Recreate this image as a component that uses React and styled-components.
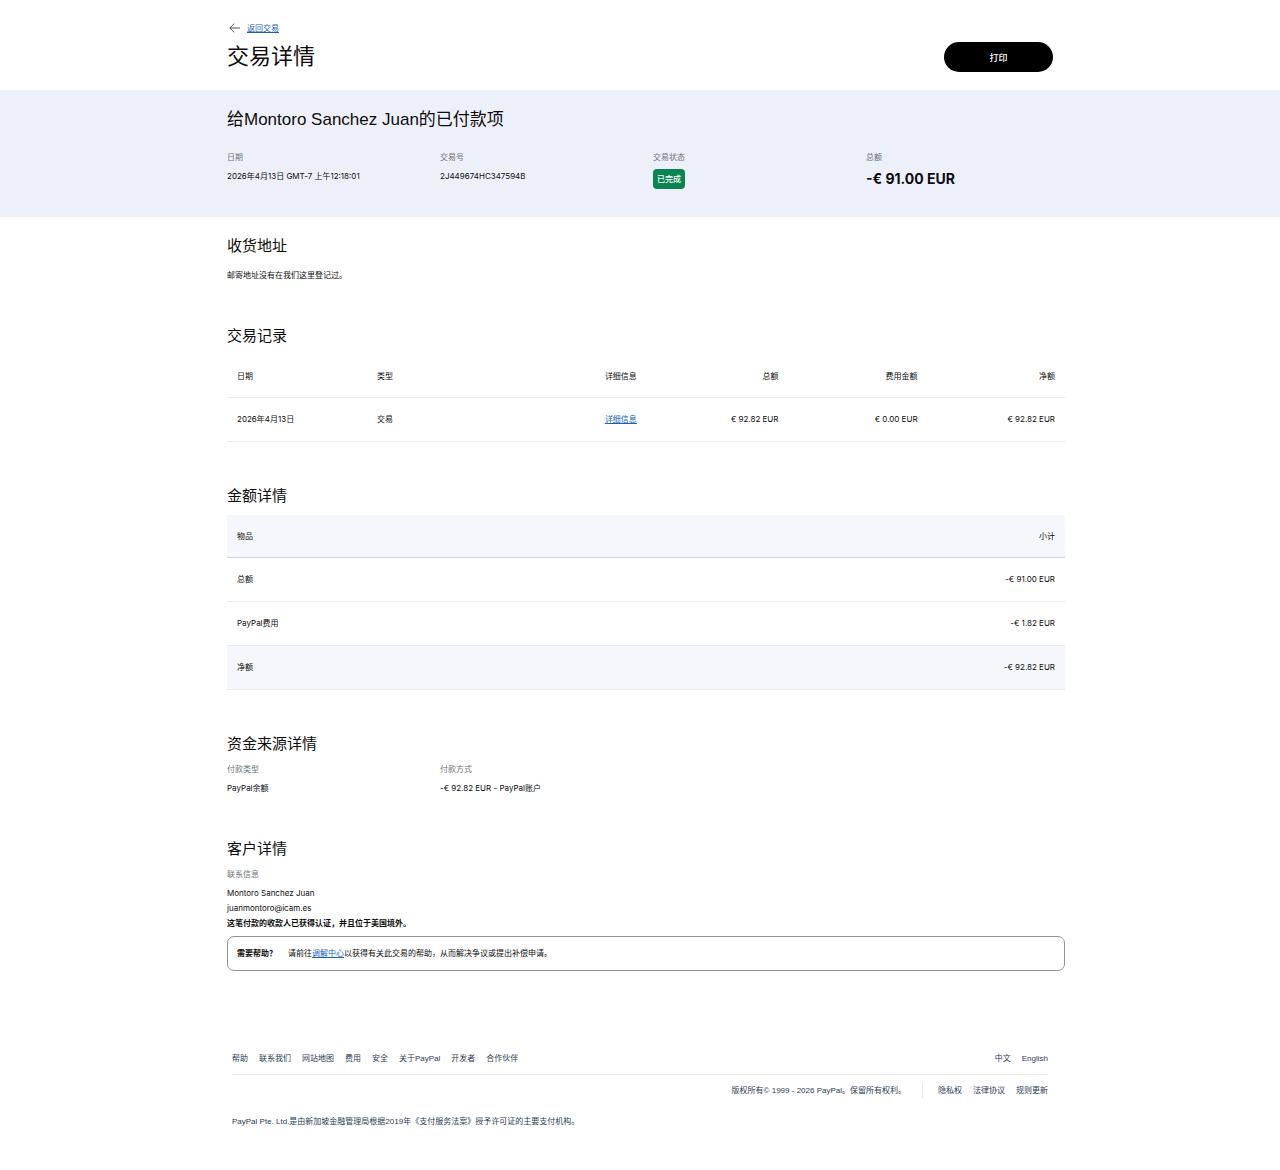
import React from 'react';
import styled, { createGlobalStyle } from 'styled-components';

const GlobalStyle = createGlobalStyle`
    * {
        box-sizing: border-box;
    }

    body {
        margin: 0;
        background: #fff;
        color: #0d0d0d;
        font-family: Inter, "Noto Sans CJK SC", sans-serif;
        font-size: 8px;
        line-height: 15px;
    }
`;

const Container = styled.div`
    max-width: 852px;
    margin: 0 auto;
    padding: 0 13px;
`;

const PageHeader = styled.header`
    padding: 22px 0 18px;
`;

const BackRow = styled.div`
    display: flex;
    align-items: center;
    gap: 7px;
    height: 12px;
    padding-left: 2px;
`;

const Link = styled.a`
    color: #1a5fb8;
    text-decoration: underline;
`;

const TitleRow = styled.div`
    display: flex;
    align-items: center;
    justify-content: space-between;
    margin-top: 8px;
`;

const Title = styled.h1`
    margin: 0;
    font-family: "Liberation Sans", "Noto Sans CJK SC", sans-serif;
    font-size: 22px;
    font-weight: 400;
    line-height: 30px;
`;

const PrintButton = styled.button`
    width: 109px;
    height: 30px;
    border: 0;
    border-radius: 15px;
    background: #000;
    color: #fff;
    font-family: inherit;
    font-size: 9px;
    font-weight: 500;
    cursor: pointer;
`;

const Summary = styled.section`
    padding: 18px 0 28px;
    background: #edf0f9;
`;

const SummaryTitle = styled.h2`
    margin: 0 0 18px;
    font-family: "Liberation Sans", "Noto Sans CJK SC", sans-serif;
    font-size: 17px;
    font-weight: 400;
    line-height: 24px;
`;

const Fields = styled.dl`
    display: grid;
    grid-template-columns: repeat(4, 1fr);
    max-width: 852px;
    margin: 0 auto;
`;

const Field = styled.div`
    padding-left: 13px;
`;

const FieldLabel = styled.dt`
    margin-bottom: 5px;
    color: #6c7378;
    line-height: 14px;
`;

const FieldValue = styled.dd`
    margin: 0;
    font-size: ${props => (props.$large ? '14px' : '8px')};
    font-weight: ${props => (props.$large ? 700 : 400)};
    line-height: ${props => (props.$large ? '20px' : '15px')};
`;

const Badge = styled.span`
    display: block;
    width: fit-content;
    padding: 0 4px;
    border-radius: 4px;
    background: #0a8552;
    color: #fff;
    font-weight: 500;
    line-height: 20px;
`;

const Main = styled.main`
    padding-top: 19px;
`;

const Section = styled.section`
    margin-bottom: 43px;
`;

const SectionBody = styled.div`
    max-width: 852px;
    margin: 0 auto;
    padding: 0 1px 0 13px;
`;

const SectionTitle = styled.h2`
    margin: 0 0 8px;
    font-family: "Liberation Sans", "Noto Sans CJK SC", sans-serif;
    font-size: 15px;
    font-weight: 400;
    line-height: 20px;
`;

const Text = styled.p`
    margin: 0;
    font-weight: ${props => (props.$bold ? 700 : 400)};
`;

const AddressText = styled(Text)`
    padding-top: 4px;
`;

const Table = styled.table`
    width: 100%;
    margin: 9px 0 44px;
    border-collapse: separate;
    border-spacing: 0;
    table-layout: fixed;
`;

const Row = styled.tr`
    background: ${props => (props.$shaded ? '#f5f7fc' : 'transparent')};
`;

const Cell = styled.td`
    width: ${props => props.$width || 'auto'};
    height: 44px;
    padding: 0 10px;
    border-bottom: 1px solid ${props => (props.$strong ? '#d3d7dc' : '#e9ebee')};
    font-weight: 400;
    text-align: ${props => (props.$right ? 'right' : 'left')};
    white-space: nowrap;
`;

const HeadCell = styled(Cell)`
    height: 43px;
`;

const Contact = styled.dl`
    margin: 0;
`;

const HelpBox = styled.aside`
    display: flex;
    gap: 11px;
    margin-top: 5px;
    padding: 9px;
    border: 1px solid #909497;
    border-radius: 7px;
`;

const Footer = styled.footer`
    max-width: 816px;
    margin: 80px auto 0;
    padding-bottom: 40px;
    color: #2c3c56;
    font-family: "Liberation Sans", "Noto Sans CJK SC", sans-serif;
`;

const FooterRow = styled.div`
    display: flex;
    align-items: center;
    justify-content: ${props => (props.$end ? 'flex-end' : 'space-between')};
    padding: ${props => (props.$end ? '8px 0' : '0 0 8px')};
    border-bottom: ${props => (props.$end ? '0' : '1px solid #e9e9e6')};
`;

const FooterLinks = styled.nav`
    display: flex;
    gap: 11px;
    padding-left: ${props => (props.$divided ? '15px' : '0')};
    margin-left: ${props => (props.$divided ? '16px' : '0')};
    border-left: ${props => (props.$divided ? '1px solid #e9ebee' : '0')};
`;

const FooterLink = styled.a`
    color: inherit;
    text-decoration: none;
`;

const FooterNote = styled(Text)`
    padding-top: 8px;
`;

const helpLinks = ['帮助', '联系我们', '网站地图', '费用', '安全', '关于PayPal', '开发者', '合作伙伴'];
const languages = ['中文', 'English'];
const legalLinks = ['隐私权', '法律协议', '规则更新'];

const amounts = [
    { name: '总额', value: '-€ 91.00 EUR' },
    { name: 'PayPal费用', value: '-€ 1.82 EUR' },
];

const BackArrow = () => (
    <svg width="11" height="10" viewBox="0 0 11 10" fill="none" stroke="#3c4043" strokeWidth="0.9" aria-hidden="true">
        <path d="M11 5H0.8M5.2 0.7L0.8 5L5.2 9.3" />
    </svg>
);

const LinkList = ({ items, divided }) => (
    <FooterLinks $divided={divided}>
        {items.map(item => <FooterLink href="#" key={item}>{item}</FooterLink>)}
    </FooterLinks>
);

const App = () => {
    return (
        <>
            <GlobalStyle />
            <Container>
                <PageHeader>
                    <BackRow>
                        <BackArrow />
                        <Link href="#">返回交易</Link>
                    </BackRow>
                    <TitleRow>
                        <Title>交易详情</Title>
                        <PrintButton type="button" onClick={() => window.print()}>打印</PrintButton>
                    </TitleRow>
                </PageHeader>
            </Container>

            <Summary>
                <Container>
                    <SummaryTitle>给Montoro Sanchez Juan的已付款项</SummaryTitle>
                </Container>
                <Fields>
                    <Field>
                        <FieldLabel>日期</FieldLabel>
                        <FieldValue>2026年4月13日 GMT-7 上午12:18:01</FieldValue>
                    </Field>
                    <Field>
                        <FieldLabel>交易号</FieldLabel>
                        <FieldValue>2J449674HC347594B</FieldValue>
                    </Field>
                    <Field>
                        <FieldLabel>交易状态</FieldLabel>
                        <FieldValue><Badge>已完成</Badge></FieldValue>
                    </Field>
                    <Field>
                        <FieldLabel>总额</FieldLabel>
                        <FieldValue $large>-€ 91.00 EUR</FieldValue>
                    </Field>
                </Fields>
            </Summary>

            <Main>
                <Section>
                    <SectionBody>
                        <SectionTitle>收货地址</SectionTitle>
                        <AddressText>邮寄地址没有在我们这里登记过。</AddressText>
                    </SectionBody>
                </Section>

                <SectionBody>
                    <SectionTitle>交易记录</SectionTitle>
                    <Table>
                        <thead>
                            <Row>
                                <HeadCell as="th" $width="16.7%">日期</HeadCell>
                                <HeadCell as="th" $width="27.2%">类型</HeadCell>
                                <HeadCell as="th" $width="6.5%">详细信息</HeadCell>
                                <HeadCell as="th" $width="16.6%" $right>总额</HeadCell>
                                <HeadCell as="th" $width="16.6%" $right>费用金额</HeadCell>
                                <HeadCell as="th" $width="16.4%" $right>净额</HeadCell>
                            </Row>
                        </thead>
                        <tbody>
                            <Row>
                                <Cell>2026年4月13日</Cell>
                                <Cell>交易</Cell>
                                <Cell><Link href="#">详细信息</Link></Cell>
                                <Cell $right>€ 92.82 EUR</Cell>
                                <Cell $right>€ 0.00 EUR</Cell>
                                <Cell $right>€ 92.82 EUR</Cell>
                            </Row>
                        </tbody>
                    </Table>

                    <SectionTitle>金额详情</SectionTitle>
                    <Table>
                        <thead>
                            <Row $shaded>
                                <HeadCell as="th" $strong>物品</HeadCell>
                                <HeadCell as="th" $strong $right>小计</HeadCell>
                            </Row>
                        </thead>
                        <tbody>
                            {amounts.map(amount => (
                                <Row key={amount.name}>
                                    <Cell>{amount.name}</Cell>
                                    <Cell $right>{amount.value}</Cell>
                                </Row>
                            ))}
                        </tbody>
                        <tfoot>
                            <Row $shaded>
                                <Cell>净额</Cell>
                                <Cell $right>-€ 92.82 EUR</Cell>
                            </Row>
                        </tfoot>
                    </Table>
                </SectionBody>

                <Section>
                    <SectionBody>
                        <SectionTitle>资金来源详情</SectionTitle>
                    </SectionBody>
                    <Fields>
                        <Field>
                            <FieldLabel>付款类型</FieldLabel>
                            <FieldValue>PayPal余额</FieldValue>
                        </Field>
                        <Field>
                            <FieldLabel>付款方式</FieldLabel>
                            <FieldValue>-€ 92.82 EUR - PayPal账户</FieldValue>
                        </Field>
                    </Fields>
                </Section>

                <SectionBody>
                    <SectionTitle>客户详情</SectionTitle>
                    <Contact>
                        <FieldLabel>联系信息</FieldLabel>
                        <FieldValue>Montoro Sanchez Juan</FieldValue>
                        <FieldValue>juanmontoro@icam.es</FieldValue>
                    </Contact>
                    <Text $bold>这笔付款的收款人已获得认证，并且位于美国境外。</Text>
                    <HelpBox>
                        <Text $bold>需要帮助？</Text>
                        <Text>请前往<Link href="#">调解中心</Link>以获得有关此交易的帮助，从而解决争议或提出补偿申请。</Text>
                    </HelpBox>
                </SectionBody>
            </Main>

            <Footer>
                <FooterRow>
                    <LinkList items={helpLinks} />
                    <LinkList items={languages} />
                </FooterRow>
                <FooterRow $end>
                    <span>版权所有© 1999 - 2026 PayPal。保留所有权利。</span>
                    <LinkList items={legalLinks} divided />
                </FooterRow>
                <FooterNote>PayPal Pte. Ltd.是由新加坡金融管理局根据2019年《支付服务法案》授予许可证的主要支付机构。</FooterNote>
            </Footer>
        </>
    );
};

export default App;
